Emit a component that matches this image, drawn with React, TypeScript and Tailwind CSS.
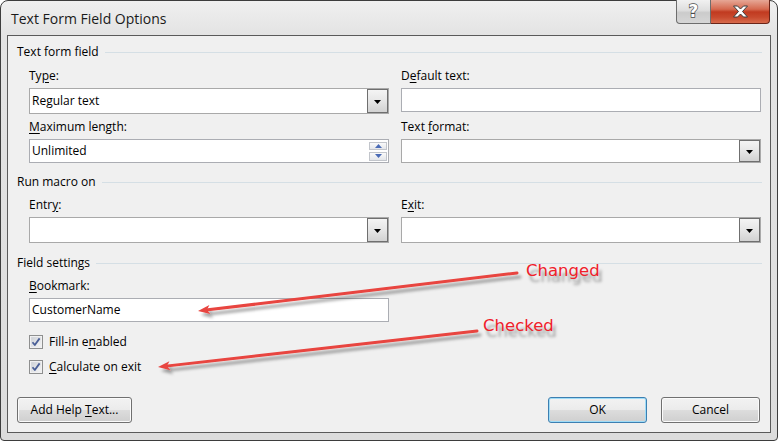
import React from "react";

function Tri({ color = "#000" }: { color?: string }) {
  return (
    <svg width="7" height="4" viewBox="0 0 7 4" className="mt-[2px]">
      <polygon points="0,0 7,0 3.5,4" fill={color} />
    </svg>
  );
}

function DropBtn() {
  return (
    <div className="w-[21px] h-full border border-[#6f6f6f] bg-[linear-gradient(to_bottom,#f4f4f4,#e6e6e6_50%,#d2d2d2)] flex items-center justify-center shrink-0">
      <Tri />
    </div>
  );
}

function Combo({ h, text }: { h: string; text?: string }) {
  return (
    <div className={`${h} w-full border border-[#a9a9a9] bg-white flex items-center`}>
      <div className="flex-1 pl-[2px] leading-none">{text}</div>
      <DropBtn />
    </div>
  );
}

function Input({ h, text, w = "w-full" }: { h: string; text?: string; w?: string }) {
  return (
    <div className={`${h} ${w} border border-[#abadb3] bg-white flex items-center pl-[2px]`}>
      <span>{text}</span>
    </div>
  );
}

function Label({ children }: { children: React.ReactNode }) {
  return <div className="h-[16px] leading-[16px] whitespace-nowrap">{children}</div>;
}

function U({ children }: { children: React.ReactNode }) {
  return <span className="underline underline-offset-[2px]">{children}</span>;
}

function Heading({ children, mt }: { children: React.ReactNode; mt: string }) {
  return (
    <div className={`${mt} h-[16px] flex items-center pl-[9px] pr-[8px]`}>
      <span className="leading-[16px] whitespace-nowrap">{children}</span>
      <div className="flex-1 h-px bg-[#d5dfe5] ml-[6px] mt-[1px]" />
    </div>
  );
}

function Check({ children }: { children: React.ReactNode }) {
  return (
    <div className="flex items-center h-[15px]">
      <svg width="14" height="14" viewBox="0 0 14 14" className="shrink-0">
        <defs>
          <linearGradient id="cbg" x1="0" y1="0" x2="1" y2="1">
            <stop offset="0" stopColor="#cbcfd5" />
            <stop offset="1" stopColor="#f7f7f7" />
          </linearGradient>
        </defs>
        <rect x="0.5" y="0.5" width="13" height="13" fill="#f4f4f4" stroke="#8e8f8f" />
        <rect x="2" y="2" width="10" height="10" fill="url(#cbg)" stroke="#e2e3e6" strokeWidth="0.5" />
        <path d="M3.5 7.2 L5.8 10 L10.6 3.4" fill="none" stroke="#4a5f97" strokeWidth="1.8" strokeLinejoin="round" />
      </svg>
      <span className="ml-[6px] leading-[15px] whitespace-nowrap">{children}</span>
    </div>
  );
}

function Btn({ children, w, def }: { children: React.ReactNode; w: string; def?: boolean }) {
  return (
    <div
      className={`${w} h-[26px] rounded-[3px] border ${
        def ? "border-[#3c7fb1] shadow-[inset_0_0_0_1px_#9fdcf7]" : "border-[#707070] shadow-[inset_0_0_0_1px_#fbfbfb]"
      } bg-[linear-gradient(to_bottom,#f2f2f2_0%,#ebebeb_50%,#dddddd_50%,#cfcfcf_100%)] flex items-center justify-center whitespace-nowrap`}
    >
      <span>{children}</span>
    </div>
  );
}

function Arrow({ x1, y1, x2, y2 }: { x1: number; y1: number; x2: number; y2: number }) {
  const dx = x2 - x1;
  const dy = y2 - y1;
  const len = Math.hypot(dx, dy);
  const ux = dx / len;
  const uy = dy / len;
  const L = 12;
  const W = 4.5;
  const bx = x2 - ux * L;
  const by = y2 - uy * L;
  const px = -uy;
  const py = ux;
  const pts = `${x2},${y2} ${bx + px * W},${by + py * W} ${bx + ux * 3},${by + uy * 3} ${bx - px * W},${by - py * W}`;
  return (
    <g filter="url(#ash)">
      <line x1={x1} y1={y1} x2={bx + ux * 2} y2={by + uy * 2} stroke="#e8443f" strokeWidth="3" strokeLinecap="round" />
      <polygon points={pts} fill="#e8443f" />
    </g>
  );
}

export default function App() {
  return (
    <div className="w-[778px] h-[441px] bg-white relative overflow-hidden font-['Open_Sans',sans-serif] text-[12px] text-black">
      <div className="w-[778px] h-[441px] rounded-t-[8px] rounded-b-[4px] border border-[#3d3d3d] bg-[linear-gradient(to_bottom,#f0f0f0,#e3e3e3_34px,#dcdcdc)] flex flex-col px-[6px] pb-[7px]">
        {/* Title bar */}
        <div className="h-[34px] flex items-start shrink-0">
          <div className="pl-[4px] pt-[8px] text-[14px] leading-[20px] text-[#1a1a1a] whitespace-nowrap">
            Text Form Field Options
          </div>
          <div className="ml-auto flex -mt-px mr-[1px]">
            <div className="w-[35px] h-[24px] rounded-bl-[4px] border border-[#6d6d6d] border-t-0 bg-[linear-gradient(to_bottom,#f1f1f1,#dedede_45%,#cbcbcb_55%,#d6d6d6)] flex items-center justify-center">
              <span className="font-['DejaVu_Sans',sans-serif] font-bold text-[17px] leading-none text-white [-webkit-text-stroke:1.3px_#4a4a4a] [paint-order:stroke_fill]">
                ?
              </span>
            </div>
            <div className="w-[59px] h-[24px] rounded-br-[4px] border border-[#6a2418] border-t-0 border-l-0 bg-[linear-gradient(to_bottom,#e6a796,#d5694f_40%,#c13a20_52%,#c84a2e_75%,#d86a4c)] flex items-center justify-center">
              <svg width="17" height="13" viewBox="0 0 17 13">
                <path
                  d="M1.5 1 H5.5 L8.5 4 L11.5 1 H15.5 L10.5 6.5 L15.5 12 H11.5 L8.5 9 L5.5 12 H1.5 L6.5 6.5 Z"
                  fill="#ffffff"
                  stroke="#3c3c3c"
                  strokeWidth="1"
                  strokeLinejoin="round"
                />
              </svg>
            </div>
          </div>
        </div>

        {/* Client area */}
        <div className="flex-1 border border-[#5a5a5a] bg-[#f0f0f0] flex flex-col pt-[8px] pb-[9px]">
          <Heading mt="mt-0">Text form field</Heading>

          <div className="grid grid-cols-[360px_360px] gap-x-[12px] pl-[21px] mt-[8px]">
            <div className="flex flex-col">
              <Label>
                Ty<U>p</U>e:
              </Label>
              <div className="mt-[4px]">
                <Combo h="h-[26px]" text="Regular text" />
              </div>
            </div>
            <div className="flex flex-col">
              <Label>
                D<U>e</U>fault text:
              </Label>
              <div className="mt-[4px]">
                <Input h="h-[24px]" />
              </div>
            </div>
            <div className="flex flex-col mt-[5px]">
              <Label>
                <U>M</U>aximum length:
              </Label>
              <div className="mt-[4px] h-[24px] w-full border border-[#abadb3] bg-white flex items-center pl-[2px]">
                <div className="flex-1">Unlimited</div>
                <div className="flex flex-col gap-[2px] mr-[1px]">
                  <div className="w-[18px] h-[8px] border border-[#c2c5cb] bg-[linear-gradient(to_bottom,#fafafa,#e4e6ea)] flex items-center justify-center">
                    <svg width="7" height="4" viewBox="0 0 7 4">
                      <polygon points="0,4 7,4 3.5,0" fill="#4a6bb6" />
                    </svg>
                  </div>
                  <div className="w-[18px] h-[9px] border border-[#c2c5cb] bg-[linear-gradient(to_bottom,#fafafa,#e4e6ea)] flex items-center justify-center">
                    <svg width="7" height="4" viewBox="0 0 7 4">
                      <polygon points="0,0 7,0 3.5,4" fill="#4a6bb6" />
                    </svg>
                  </div>
                </div>
              </div>
            </div>
            <div className="flex flex-col mt-[5px]">
              <Label>
                Text <U>f</U>ormat:
              </Label>
              <div className="mt-[4px]">
                <Combo h="h-[24px]" />
              </div>
            </div>
          </div>

          <Heading mt="mt-[11px]">Run macro on</Heading>

          <div className="grid grid-cols-[360px_360px] gap-x-[12px] pl-[21px] mt-[7px]">
            <div className="flex flex-col">
              <Label>
                Entr<U>y</U>:
              </Label>
              <div className="mt-[4px]">
                <Combo h="h-[26px]" />
              </div>
            </div>
            <div className="flex flex-col">
              <Label>
                E<U>x</U>it:
              </Label>
              <div className="mt-[4px]">
                <Combo h="h-[26px]" />
              </div>
            </div>
          </div>

          <Heading mt="mt-[12px]">Field settings</Heading>

          <div className="flex flex-col pl-[21px] mt-[7px]">
            <Label>
              <U>B</U>ookmark:
            </Label>
            <div className="mt-[4px]">
              <Input h="h-[24px]" w="w-[360px]" text="CustomerName" />
            </div>
            <div className="mt-[12px]">
              <Check>
                Fill-in e<U>n</U>abled
              </Check>
            </div>
            <div className="mt-[10px]">
              <Check>
                <U>C</U>alculate on exit
              </Check>
            </div>
          </div>

          <div className="mt-auto flex items-center pl-[9px] pr-[10px]">
            <Btn w="w-[115px]">
              Add Help <U>T</U>ext...
            </Btn>
            <div className="ml-auto flex gap-[14px]">
              <Btn w="w-[99px]" def>
                OK
              </Btn>
              <Btn w="w-[99px]">Cancel</Btn>
            </div>
          </div>
        </div>
      </div>

      {/* Annotations */}
      <svg className="absolute inset-0 pointer-events-none" width="778" height="441" viewBox="0 0 778 441">
        <defs>
          <filter id="ash" x="-10%" y="-50%" width="120%" height="300%">
            <feDropShadow dx="3" dy="4" stdDeviation="1.8" floodColor="#000" floodOpacity="0.35" />
          </filter>
        </defs>
        <Arrow x1={517} y1={273} x2={198} y2={311} />
        <Arrow x1={477} y1={331} x2={158} y2={367} />
      </svg>
      <div className="absolute left-[526px] top-[261px] font-['DejaVu_Sans',sans-serif] text-[16.5px] leading-[20px] text-[#f0202a] [text-shadow:3px_6px_3px_rgba(0,0,0,0.35)] whitespace-nowrap">
        Changed
      </div>
      <div className="absolute left-[483px] top-[316px] font-['DejaVu_Sans',sans-serif] text-[16.5px] leading-[20px] text-[#f0202a] [text-shadow:3px_6px_3px_rgba(0,0,0,0.35)] whitespace-nowrap">
        Checked
      </div>
    </div>
  );
}
